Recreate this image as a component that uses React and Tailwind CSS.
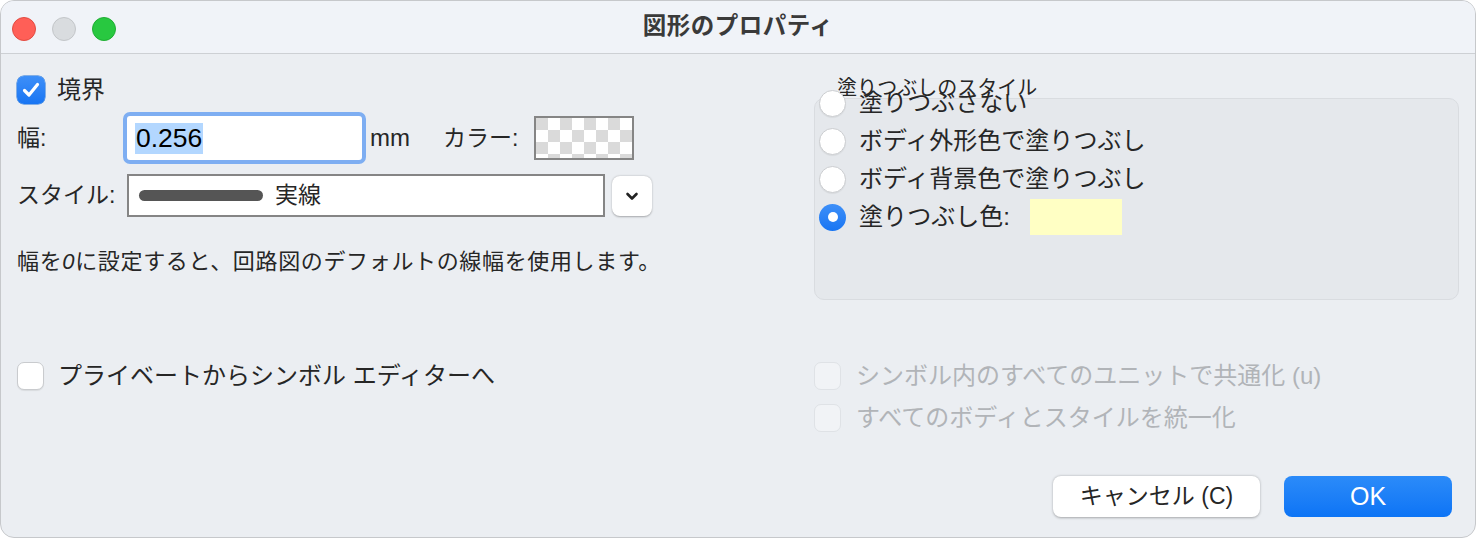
import React from 'react';

const font = { fontFamily: '"Liberation Sans", "Noto Sans CJK JP", sans-serif' };

function Check({ checked, disabled }) {
  if (checked) {
    return (
      <span className="flex h-[28px] w-[28px] shrink-0 items-center justify-center rounded-[7px] bg-gradient-to-b from-[#3d8ff8] to-[#1775f3] shadow-[0_0_0_0.5px_#1a6fd8]">
        <svg width="22" height="22" viewBox="0 0 22 22">
          <path d="M4.5 11.5 L9 16 L17.5 5.5" fill="none" stroke="#fff" strokeWidth="3.2" strokeLinecap="round" strokeLinejoin="round" />
        </svg>
      </span>
    );
  }
  return (
    <span
      className={`h-[28px] w-[27px] shrink-0 rounded-[7px] border ${
        disabled ? 'border-[#dfe2e6] bg-[#f1f3f6]' : 'border-[#c9cbce] bg-white shadow-[0_1px_1px_rgba(0,0,0,0.08)]'
      }`}
    />
  );
}

function Radio({ on }) {
  if (on) {
    return (
      <span className="flex h-[27px] w-[27px] shrink-0 items-center justify-center rounded-full bg-gradient-to-b from-[#3d8ff8] to-[#1775f3]">
        <span className="h-[10px] w-[10px] rounded-full bg-white" />
      </span>
    );
  }
  return <span className="h-[27px] w-[27px] shrink-0 rounded-full border border-[#cbcdd0] bg-white shadow-[0_1px_1px_rgba(0,0,0,0.06)]" />;
}

export default function App() {
  const fills = ['塗りつぶさない', 'ボディ外形色で塗りつぶし', 'ボディ背景色で塗りつぶし'];

  return (
    <div className="h-[538px] w-[1476px] bg-white text-[#262626]" style={font}>
      <div className="flex h-full w-full flex-col overflow-hidden rounded-[14px] border border-[#c6c8cb] bg-[#ebeef2]">
        {/* Title bar */}
        <div className="grid h-[53px] shrink-0 grid-cols-[1fr_auto_1fr] items-center border-b border-[#cdd0d4] bg-[#f0f3f8]">
          <div className="flex items-center gap-[16px] pl-[11px] pt-[3px]">
            <span className="h-[24px] w-[24px] rounded-full border border-[#e24b41] bg-[#ff5f57]" />
            <span className="h-[24px] w-[24px] rounded-full border border-[#c3c6c9] bg-[#d9dcdf]" />
            <span className="h-[24px] w-[24px] rounded-full border border-[#1fae33] bg-[#28c840]" />
          </div>
          <div className="text-[23.5px] font-bold leading-none tracking-[0.5px] text-[#3a3a3a]">図形のプロパティ</div>
          <div />
        </div>

        {/* Body */}
        <div className="flex flex-1 flex-col">
          <div className="flex items-start">
            {/* Left column */}
            <div className="w-[813px] shrink-0 pl-[16px] pt-[22px]">
              <div className="flex h-[28px] items-center gap-[12px]">
                <Check checked />
                <span className="text-[24px] leading-none">境界</span>
              </div>

              <div className="mt-[8px] flex h-[52px] items-center">
                <span className="w-[106px] text-[23px] leading-none">幅:</span>
                <div className="flex h-[52px] w-[243px] items-center rounded-[7px] border-[4px] border-[#7eaef2] bg-white pl-[8px]">
                  <span className="bg-[#b3d7ff] px-[1px] text-[26.5px] leading-[31px] text-black">0.256</span>
                </div>
                <span className="ml-[4px] text-[24px] leading-none">mm</span>
                <span className="ml-[33px] text-[23px] leading-none">カラー:</span>
                <div className="ml-[16px] h-[44px] w-[100px] border-[2px] border-[#858585] bg-[conic-gradient(#ffffff_25%,#dadada_0_50%,#ffffff_0_75%,#dadada_0)] bg-[length:24px_24px]" />
              </div>

              <div className="mt-[10px] flex h-[43px] items-center">
                <span className="w-[110px] text-[23px] leading-none">スタイル:</span>
                <div className="flex h-[43px] w-[478px] items-center border-[2px] border-[#858585] bg-white pl-[10px]">
                  <span className="h-[11px] w-[124px] rounded-full bg-[#555555]" />
                  <span className="ml-[12px] text-[23px] leading-none">実線</span>
                </div>
                <button className="ml-[7px] flex h-[40px] w-[40px] items-center justify-center rounded-[8px] bg-white shadow-[0_0.5px_2px_rgba(0,0,0,0.3)]">
                  <svg width="16" height="16" viewBox="0 0 16 16">
                    <path d="M3.5 6 L8 10.5 L12.5 6" fill="none" stroke="#222" strokeWidth="2.6" strokeLinecap="round" strokeLinejoin="round" />
                  </svg>
                </button>
              </div>

              <p className="mt-[30px] text-[22px] leading-[30px] tracking-[0.65px]">
                幅を<span className="italic">0</span>に設定すると、回路図のデフォルトの線幅を使用します。
              </p>
            </div>

            {/* Right column: fill style group */}
            <div className="w-[645px] shrink-0 pt-[24px]">
              <div className="pl-[23px] text-[20px] leading-[20px]">塗りつぶしのスタイル</div>
              <div className="h-[202px] rounded-[10px] border border-[#d9dce0] bg-[#e5e8ec] pl-[4px]">
                <div className="-mt-[15px]">
                  {fills.map((f) => (
                    <div key={f} className="flex h-[38px] items-center gap-[13px]">
                      <Radio />
                      <span className="text-[24px] leading-none">{f}</span>
                    </div>
                  ))}
                  <div className="flex h-[38px] items-center gap-[13px]">
                    <Radio on />
                    <span className="text-[24px] leading-none">塗りつぶし色:</span>
                    <span className="ml-[7px] h-[36px] w-[92px] bg-[#ffffc4]" />
                  </div>
                </div>
              </div>
            </div>
          </div>

          {/* Second section */}
          <div className="mt-[55px] flex items-start">
            <div className="flex h-[42px] w-[813px] shrink-0 items-center gap-[14px] pl-[16px]">
              <Check />
              <span className="text-[24px] leading-none">プライベートからシンボル エディターへ</span>
            </div>
            <div className="w-[645px] shrink-0">
              <div className="flex h-[42px] items-center gap-[15px] text-[#b1b4b8]">
                <Check disabled />
                <span className="text-[24px] leading-none">シンボル内のすべてのユニットで共通化 (u)</span>
              </div>
              <div className="flex h-[42px] items-center gap-[15px] text-[#b1b4b8]">
                <Check disabled />
                <span className="text-[24px] leading-none">すべてのボディとスタイルを統一化</span>
              </div>
            </div>
          </div>

          {/* Buttons */}
          <div className="mt-[37px] flex justify-end gap-[24px] pr-[23px]">
            <button className="h-[41px] w-[207px] rounded-[8px] bg-white text-[23px] leading-none shadow-[0_0.5px_2.5px_rgba(0,0,0,0.3)]">
              キャンセル (C)
            </button>
            <button className="h-[41px] w-[168px] rounded-[8px] bg-gradient-to-b from-[#2b8bf9] to-[#0c74f5] text-[25px] leading-none text-white">
              OK
            </button>
          </div>
        </div>
      </div>
    </div>
  );
}
